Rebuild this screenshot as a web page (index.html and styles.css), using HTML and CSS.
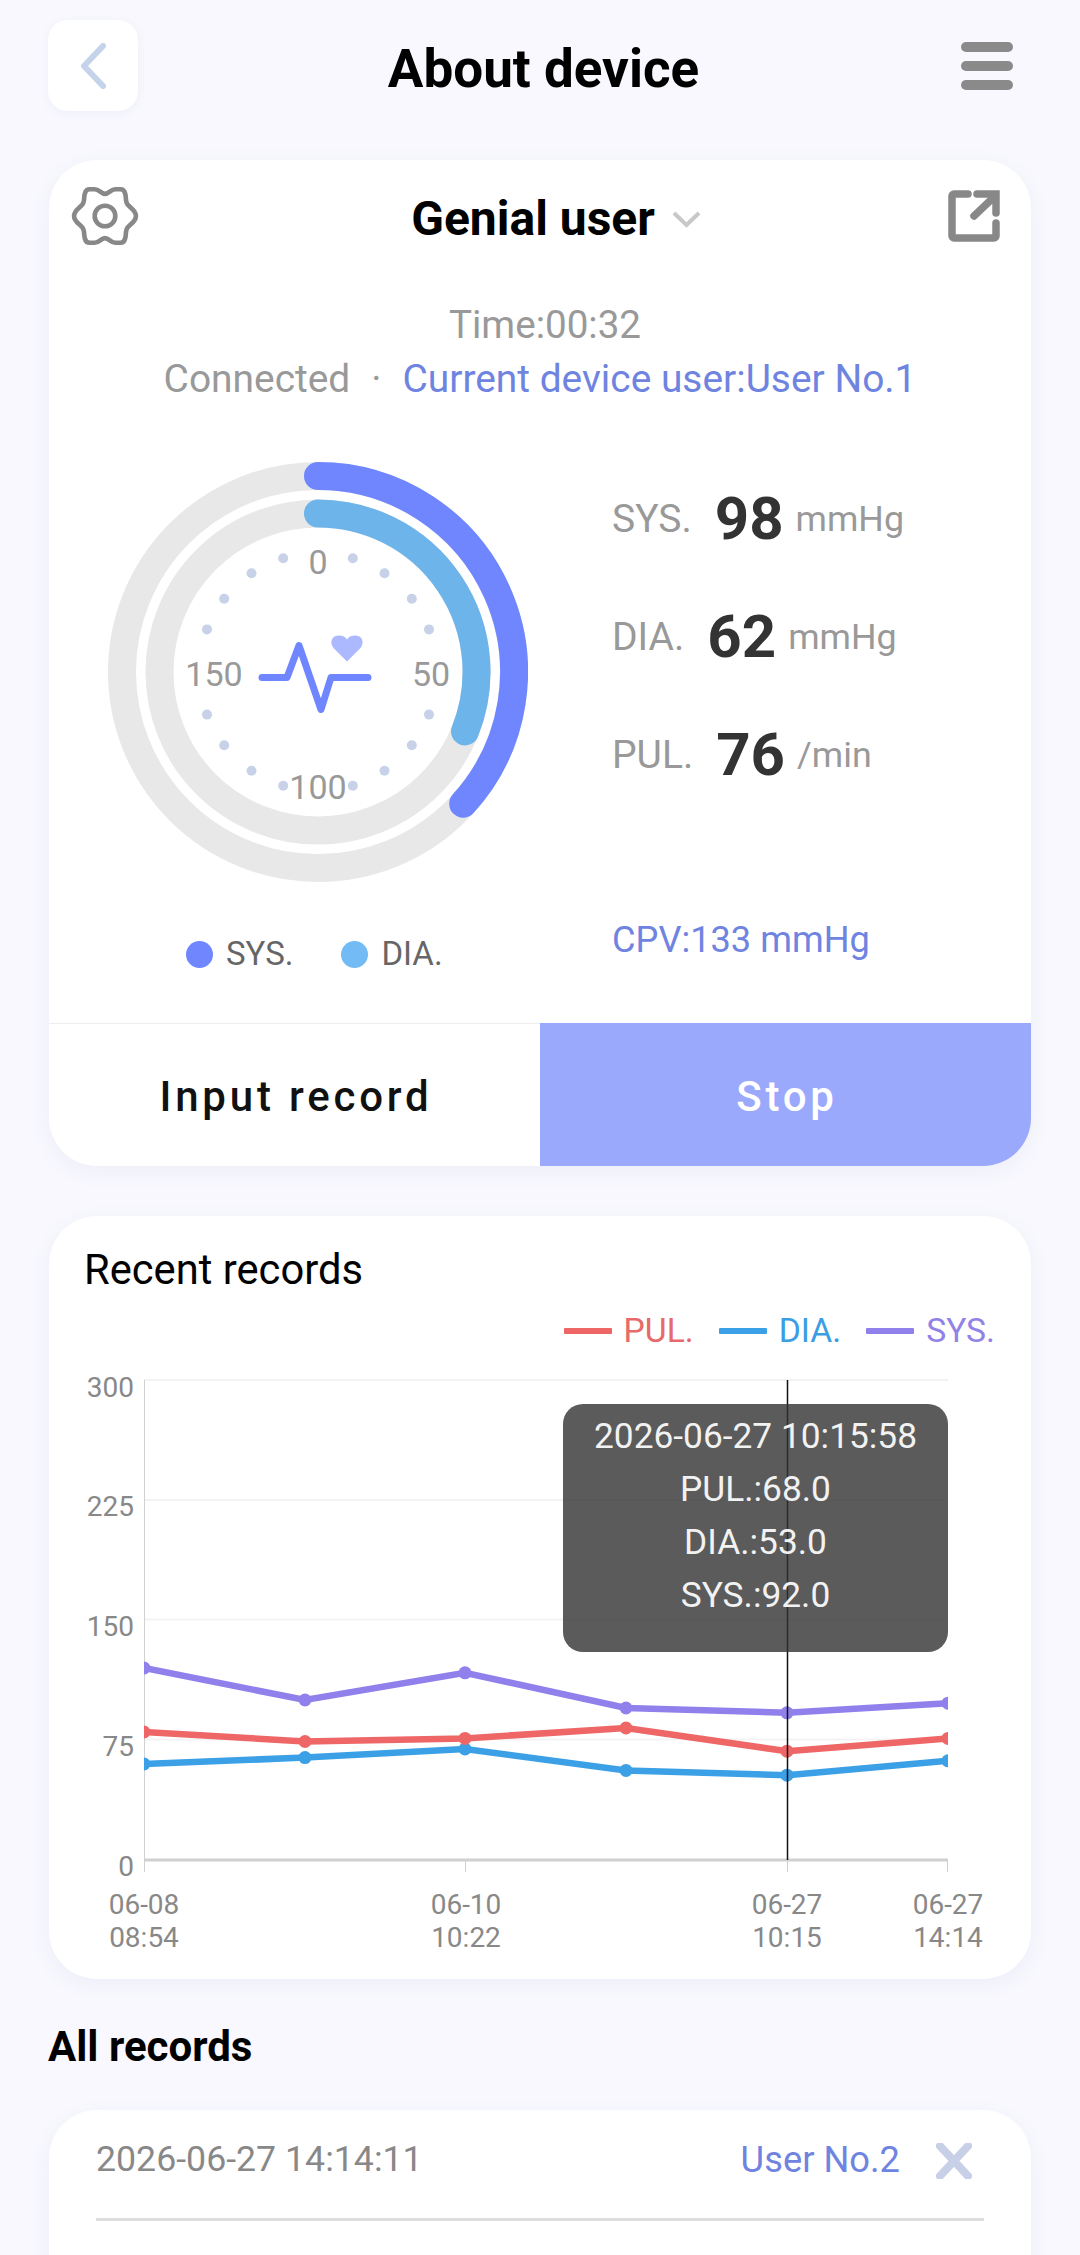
FILE: index.html
```html
<!DOCTYPE html>
<html lang="en">
<head>
    <meta charset="utf-8"/>
    <meta content="width=device-width, initial-scale=1" name="viewport"/>
    <title>About device</title>
    <link rel="stylesheet" href="styles.css">
</head>
<body>
<div class="page">

    <header class="topbar">
        <div class="back">
            <svg width="26" height="46" viewBox="0 0 26 46"><path d="M23 3 L4 23 L23 43" class="back-arrow"/></svg>
        </div>
        <h1 class="title">About device</h1>
        <div class="menu"><span></span><span></span><span></span></div>
    </header>

    <section class="card device">
        <div class="device-head">
            <svg class="gear" width="68" height="64" viewBox="0 0 66 62">
                <path d="M33 9.5 C37 9.5 38.5 5 43 5 H48 C51 5 52 7 52.5 9 C54 13 52 18 56 21 C59 24 63 26 63 31 C63 36 59 38 56 41 C52 44 54 49 52.5 53 C52 55 51 57 48 57 H43 C38.5 57 37 52.5 33 52.5 C29 52.5 27.5 57 23 57 H18 C15 57 14 55 13.5 53 C12 49 14 44 10 41 C7 38 3 36 3 31 C3 26 7 24 10 21 C14 18 12 13 13.5 9 C14 7 15 5 18 5 H23 C27.5 5 29 9.5 33 9.5 Z"/>
                <circle cx="33" cy="31" r="10"/>
            </svg>
            <div class="user-pick">
                <span class="user-name">Genial user</span>
                <svg width="31" height="18" viewBox="0 0 31 18"><path d="M3 3 L15.5 15 L28 3" class="pick-arrow"/></svg>
            </div>
            <svg class="share" width="54" height="54" viewBox="0 0 54 54">
                <path d="M20 5 H6 C5 5 4 6 4 7 V47 C4 48 5 49 6 49 H46 C47 49 48 48 48 47 V34"/>
                <path d="M29 5 H48 V24"/>
                <path d="M26 27 L46 8"/>
            </svg>
        </div>

        <div class="meta">
            <div class="meta-time">Time:00:32</div>
            <div class="meta-state">
                <span>Connected</span>
                <span class="meta-dot">·</span>
                <span class="link">Current device user:User No.1</span>
            </div>
        </div>

        <div class="reading">
            <div class="gauge">
                <svg width="420" height="420" viewBox="0 0 420 420">
                    <circle cx="210" cy="210" r="196" class="track"/>
                    <circle cx="210" cy="210" r="158.5" class="track"/>
                    <path d="M210 14 A196 196 0 0 1 355.2 341.7" class="arc-sys"/>
                    <path d="M210 51.5 A158.5 158.5 0 0 1 357 269.4" class="arc-dia"/>
                    <g class="ticks">
                        <circle cx="244.8" cy="96.2" r="5"/><circle cx="276.5" cy="111.3" r="5"/>
                        <circle cx="303.8" cy="136.7" r="5"/><circle cx="321" cy="167.4" r="5"/>
                        <circle cx="321" cy="252.6" r="5"/><circle cx="303.8" cy="283.3" r="5"/>
                        <circle cx="276.5" cy="308.7" r="5"/><circle cx="244.8" cy="323.8" r="5"/>
                        <circle cx="175.2" cy="323.8" r="5"/><circle cx="143.5" cy="308.7" r="5"/>
                        <circle cx="116.2" cy="283.3" r="5"/><circle cx="99" cy="252.6" r="5"/>
                        <circle cx="99" cy="167.4" r="5"/><circle cx="116.2" cy="136.7" r="5"/>
                        <circle cx="143.5" cy="111.3" r="5"/><circle cx="175.2" cy="96.2" r="5"/>
                    </g>
                    <g class="gauge-labels">
                        <text x="210" y="112">0</text>
                        <text x="323" y="223.5">50</text>
                        <text x="210" y="337">100</text>
                        <text x="106" y="223.5">150</text>
                    </g>
                    <path d="M154 215.5 H179 L191 183.5 L213 247.5 L223 215.5 H260" class="ecg"/>
                    <path d="M239 199.5 L225.5 186 C221 180 224 173.5 231 173.5 C235 173.5 237.5 175 239 177.5 C240.5 175 243 173.5 247 173.5 C254 173.5 257 180 252.5 186 Z" class="heart"/>
                </svg>
                <div class="gauge-legend">
                    <span class="legend-item"><i class="dot dot-sys"></i>SYS.</span>
                    <span class="legend-item"><i class="dot dot-dia"></i>DIA.</span>
                </div>
            </div>

            <div class="stats">
                <div class="stat"><span class="stat-name">SYS.</span><span class="stat-num">98</span><span class="stat-unit">mmHg</span></div>
                <div class="stat"><span class="stat-name">DIA.</span><span class="stat-num">62</span><span class="stat-unit">mmHg</span></div>
                <div class="stat"><span class="stat-name">PUL.</span><span class="stat-num">76</span><span class="stat-unit">/min</span></div>
                <div class="cpv link">CPV:133 mmHg</div>
            </div>
        </div>

        <div class="actions">
            <div class="action">Input record</div>
            <div class="action action-stop">Stop</div>
        </div>
    </section>

    <section class="card recent">
        <h2 class="recent-title">Recent records</h2>
        <div class="chart-legend">
            <span class="series series-pul"><i></i>PUL.</span>
            <span class="series series-dia"><i></i>DIA.</span>
            <span class="series series-sys"><i></i>SYS.</span>
        </div>
        <div class="chart">
            <svg width="982" height="600" viewBox="49 1360 982 600">
                <defs><clipPath id="plot"><rect x="144" y="1370" width="804" height="500"/></clipPath></defs>
                <g class="grid">
                    <path d="M144 1380 H948"/><path d="M144 1500 H948"/><path d="M144 1619.5 H948"/><path d="M144 1739.5 H948"/>
                </g>
                <path d="M144.5 1380 V1872" class="axis"/>
                <path d="M144 1860 H948" class="axis axis-x"/>
                <path d="M465.5 1860 V1872 M787.5 1860 V1872 M947.5 1860 V1872" class="axis"/>
                <g class="y-labels">
                    <text x="134" y="1397">300</text>
                    <text x="134" y="1516">225</text>
                    <text x="134" y="1636">150</text>
                    <text x="134" y="1756">75</text>
                    <text x="134" y="1876">0</text>
                </g>
                <g class="x-labels">
                    <text x="144" y="1914">06-08</text><text x="144" y="1947">08:54</text>
                    <text x="466" y="1914">06-10</text><text x="466" y="1947">10:22</text>
                    <text x="787" y="1914">06-27</text><text x="787" y="1947">10:15</text>
                    <text x="948" y="1914">06-27</text><text x="948" y="1947">14:14</text>
                </g>
                <g clip-path="url(#plot)">
                    <g class="line-sys">
                        <polyline points="144,1668 305,1700 465,1672.8 626,1708 787,1712.8 948,1703.2"/>
                        <circle cx="144" cy="1668" r="6.5"/><circle cx="305" cy="1700" r="6.5"/><circle cx="465" cy="1672.8" r="6.5"/>
                        <circle cx="626" cy="1708" r="6.5"/><circle cx="787" cy="1712.8" r="6.5"/><circle cx="948" cy="1703.2" r="6.5"/>
                    </g>
                    <g class="line-dia">
                        <polyline points="144,1764 305,1757.6 465,1749 626,1770.4 787,1775.2 948,1760.8"/>
                        <circle cx="144" cy="1764" r="6.5"/><circle cx="305" cy="1757.6" r="6.5"/><circle cx="465" cy="1749" r="6.5"/>
                        <circle cx="626" cy="1770.4" r="6.5"/><circle cx="787" cy="1775.2" r="6.5"/><circle cx="948" cy="1760.8" r="6.5"/>
                    </g>
                    <g class="line-pul">
                        <polyline points="144,1732 305,1741.5 465,1738.4 626,1728 787,1751.2 948,1738.4"/>
                        <circle cx="144" cy="1732" r="6.5"/><circle cx="305" cy="1741.5" r="6.5"/><circle cx="465" cy="1738.4" r="6.5"/>
                        <circle cx="626" cy="1728" r="6.5"/><circle cx="787" cy="1751.2" r="6.5"/><circle cx="948" cy="1738.4" r="6.5"/>
                    </g>
                </g>
                <path d="M787.5 1380 V1860" class="cursor"/>
            </svg>
            <div class="tooltip">
                <div>2026-06-27 10:15:58</div>
                <div>PUL.:68.0</div>
                <div>DIA.:53.0</div>
                <div>SYS.:92.0</div>
            </div>
        </div>
    </section>

    <h2 class="all-title">All records</h2>

    <section class="card records">
        <div class="record">
            <span class="record-date">2026-06-27 14:14:11</span>
            <span class="record-user link">User No.2</span>
            <svg class="record-del" width="36" height="36" viewBox="0 0 36 36"><path d="M4 3 L32 33 M32 3 L4 33"/></svg>
        </div>
    </section>

</div>
</body>
</html>
```

FILE: styles.css
```css
html, body {
    margin: 0;
    padding: 0;
    background: #f8f8fe;
}

body {
    font-family: Roboto, "Noto Sans", sans-serif;
    height: 2255px;
    overflow: hidden;
}

.page {
    padding: 20px 49px 0;
}

.link {
    color: #6f84e0;
}

/* top bar */
.topbar {
    display: flex;
    align-items: flex-start;
    justify-content: space-between;
    height: 140px;
}

.back {
    width: 90px;
    height: 91px;
    margin-left: -1px;
    background: #fff;
    border-radius: 20px;
    box-shadow: 0 2px 8px rgba(120, 130, 180, 0.08);
    display: flex;
    align-items: center;
    padding-left: 32px;
    box-sizing: border-box;
}

.back-arrow {
    fill: none;
    stroke: #c5d3ea;
    stroke-width: 6;
    stroke-linecap: round;
    stroke-linejoin: round;
}

.title {
    margin: 22px 0 0 -12px;
    font-size: 53px;
    line-height: 54px;
    font-weight: 700;
    color: #000;
}

.menu {
    width: 52px;
    margin: 22px 18px 0 0;
    display: flex;
    flex-direction: column;
    gap: 9px;
}

.menu span {
    height: 10px;
    background: #8a8a8a;
    border-radius: 5px;
}

/* cards */
.card {
    background: #fff;
    border-radius: 48px;
    box-shadow: 0 6px 20px rgba(120, 130, 180, 0.08);
}

.device {
    overflow: hidden;
    height: 1006px;
    display: flex;
    flex-direction: column;
}

.device-head {
    display: flex;
    justify-content: space-between;
    align-items: flex-start;
    padding: 24px 29px 0 22px;
    height: 63px;
}

.gear path, .gear circle {
    fill: none;
    stroke: #888;
    stroke-width: 4.5;
    stroke-linejoin: round;
}

.share {
    margin-top: 5px;
}

.share path {
    fill: none;
    stroke: #888;
    stroke-width: 7.5;
    stroke-linecap: round;
}

.user-pick {
    display: flex;
    align-items: center;
    gap: 16px;
    margin: 7px 0 0 26px;
}

.user-name {
    font-size: 48px;
    line-height: 56px;
    font-weight: 700;
    color: #000;
}

.pick-arrow {
    fill: none;
    stroke: #c8c8c8;
    stroke-width: 4;
}

.meta {
    margin-top: 51px;
    text-align: center;
    font-size: 38.6px;
    line-height: 54px;
    color: #999;
}

.meta-time {
    padding-left: 10px;
}

.meta-state {
    display: flex;
    justify-content: center;
    gap: 21px;
    font-size: 38.9px;
}

.reading {
    display: flex;
    margin-top: 56px;
    flex: 1;
}

.gauge {
    margin-left: 59px;
    width: 420px;
}

.gauge svg {
    display: block;
}

.track {
    fill: none;
    stroke: #e8e8e8;
    stroke-width: 28;
}

.arc-sys, .arc-dia {
    fill: none;
    stroke-width: 28;
    stroke-linecap: round;
}

.arc-sys {
    stroke: #6f86ff;
}

.arc-dia {
    stroke: #6cb4ea;
}

.ticks circle {
    fill: #c7d2e8;
}

.gauge-labels text {
    font-size: 34px;
    fill: #999;
    text-anchor: middle;
}

.ecg {
    fill: none;
    stroke: #6f86ff;
    stroke-width: 7;
    stroke-linecap: round;
    stroke-linejoin: round;
}

.heart {
    fill: #adb9ff;
}

.gauge-legend {
    display: flex;
    margin: 52px 0 0 78px;
    gap: 48px;
    font-size: 33px;
    line-height: 40px;
    color: #666;
}

.legend-item {
    display: flex;
    align-items: center;
    gap: 13px;
}

.dot {
    width: 27px;
    height: 27px;
    border-radius: 50%;
}

.dot-sys {
    background: #6f86ff;
}

.dot-dia {
    background: #72bbf5;
}

.stats {
    margin-left: 84px;
    margin-top: -2px;
}

.stat {
    height: 118px;
    display: flex;
    align-items: center;
    line-height: 118px;
    color: #999;
    font-size: 39px;
}

.stat-num {
    font-size: 60px;
    font-weight: 700;
    color: #333;
    margin: 0 12px 0 23px;
}

.stat-unit {
    font-size: 35.8px;
}

.cpv {
    margin-top: 101px;
    font-size: 36.2px;
    line-height: 50px;
}

.actions {
    display: flex;
    height: 143px;
    border-top: 1px solid #eee;
    box-sizing: border-box;
}

.action {
    flex: 1;
    display: flex;
    align-items: center;
    justify-content: center;
    padding: 3px 0 0 3px;
    font-size: 42px;
    font-weight: 500;
    letter-spacing: 3.8px;
    color: #111;
}

.action-stop {
    background: #9ba9fd;
    color: #fff;
    margin-top: -1px;
}

/* recent records */
.recent {
    margin-top: 50px;
    height: 763px;
    overflow: hidden;
}

.recent-title {
    margin: 0;
    padding: 31px 0 0 35px;
    font-size: 41.7px;
    line-height: 46px;
    font-weight: 400;
    color: #000;
}

.chart-legend {
    display: flex;
    justify-content: flex-end;
    gap: 25px;
    margin-top: 18px;
    padding-right: 36px;
    font-size: 33.7px;
    line-height: 40px;
}

.series {
    display: flex;
    align-items: center;
    gap: 12px;
}

.series i {
    width: 48px;
    height: 6px;
    border-radius: 1px;
}

.series-pul {
    color: #e76a6a;
}

.series-pul i {
    background: #ee6666;
}

.series-dia {
    color: #3b9de3;
}

.series-dia i {
    background: #3ba0e6;
}

.series-sys {
    color: #9182e8;
}

.series-sys i {
    background: #9080ec;
}

.chart {
    position: relative;
    margin-top: 9px;
}

.chart svg {
    display: block;
}

.grid path {
    stroke: #f3f3f5;
    stroke-width: 2;
}

.axis {
    fill: none;
    stroke: #d0d0d0;
    stroke-width: 1;
}

.axis-x {
    stroke-width: 3;
}

.y-labels text, .x-labels text {
    font-size: 28px;
    fill: #888;
}

.y-labels text {
    text-anchor: end;
}

.x-labels text {
    text-anchor: middle;
}

.line-sys polyline, .line-dia polyline, .line-pul polyline {
    fill: none;
    stroke-width: 6.5;
}

.line-sys polyline {
    stroke: #9080ec;
}

.line-sys circle {
    fill: #9080ec;
}

.line-dia polyline {
    stroke: #3ba0e6;
}

.line-dia circle {
    fill: #3ba0e6;
}

.line-pul polyline {
    stroke: #ee6666;
}

.line-pul circle {
    fill: #ee6666;
}

.cursor {
    stroke: #111;
    stroke-width: 1.5;
}

.tooltip {
    position: absolute;
    left: 514px;
    top: 44px;
    width: 385px;
    height: 248px;
    box-sizing: border-box;
    padding-top: 6px;
    border-radius: 20px;
    background: rgba(50, 50, 50, 0.8);
    color: #f2f2f2;
    font-size: 35.3px;
    line-height: 53px;
    text-align: center;
}

/* all records */
.all-title {
    margin: 45px 0 0 -1px;
    font-size: 42px;
    line-height: 46px;
    font-weight: 700;
    color: #000;
}

.records {
    margin-top: 40px;
    height: 240px;
    padding: 27px 47px 0;
}

.record {
    display: flex;
    align-items: center;
    height: 44px;
    padding-bottom: 37px;
    border-bottom: 3px solid #ddd;
    font-size: 35.7px;
}

.record-date {
    color: #888;
    flex: 1;
}

.record-user {
    font-size: 36.3px;
}

.record-del {
    margin: 4px 12px 0 36px;
}

.record-del path {
    fill: none;
    stroke: #c7d0e6;
    stroke-width: 8;
    stroke-linecap: round;
}
```
